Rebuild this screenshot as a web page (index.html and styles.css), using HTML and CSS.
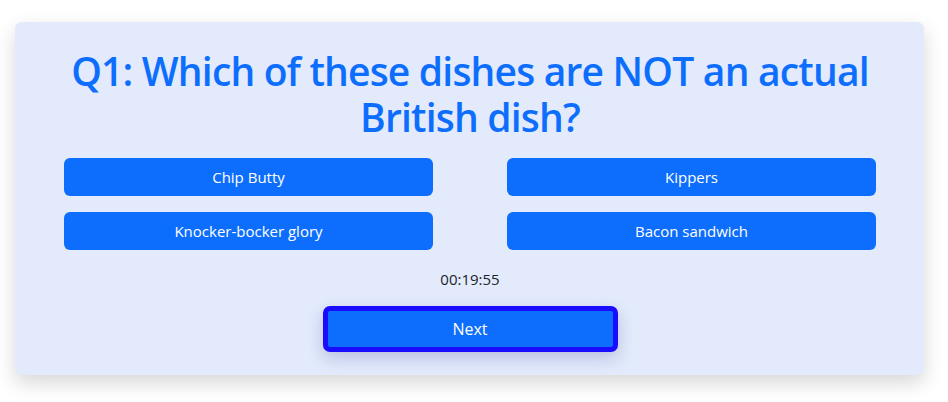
FILE: index.html
```html
<!DOCTYPE html>
<html lang="en">
<head>
<meta charset="utf-8">
<title>Quiz</title>
<link rel="stylesheet" href="styles.css">
</head>
<body>
<main class="card">
  <h1 class="question">Q1: Which of these dishes are NOT an actual British dish?</h1>
  <div class="answers">
    <button class="answer">Chip Butty</button>
    <button class="answer">Kippers</button>
    <button class="answer">Knocker-bocker glory</button>
    <button class="answer">Bacon sandwich</button>
  </div>
  <div class="timer">00:19:55</div>
  <div class="actions">
    <button class="next">Next</button>
  </div>
</main>
</body>
</html>
```
FILE: styles.css
```css
* { box-sizing: border-box; }
html, body { margin: 0; padding: 0; background: #ffffff; }
body {
  padding: 22px 24px 27px 15px;
  min-height: 402px;
  font-family: "Open Sans", "Noto Sans", sans-serif;
  color: #212529;
}
.card {
  width: 909px;
  background: #e2eafc;
  border-radius: 7px;
  box-shadow: 0 8px 20px rgba(0, 0, 0, 0.16);
  padding: 26px 48px 23px 49px;
}
.question {
  margin: 0;
  text-align: center;
  color: #0d6efd;
  font-weight: 600;
  font-size: 39px;
  line-height: 46px;
  letter-spacing: -0.8px;
}
.answers {
  margin-top: 18px;
  display: grid;
  grid-template-columns: 1fr 1fr;
  grid-auto-rows: 38px;
  column-gap: 74px;
  row-gap: 16px;
}
.answer {
  border: none;
  border-radius: 6px;
  background: #0d6efd;
  color: #ffffff;
  font-family: inherit;
  font-size: 15px;
  padding: 0;
  cursor: pointer;
}
.timer {
  margin-top: 17px;
  text-align: center;
  font-size: 15px;
  line-height: 24px;
}
.actions {
  margin-top: 15px;
  display: flex;
  justify-content: center;
}
.next {
  width: 295px;
  height: 46px;
  border: 5px solid #1a0dff;
  border-radius: 7px;
  background: #0d6efd;
  color: #ffffff;
  font-family: inherit;
  font-size: 16px;
  box-shadow: 0 6px 16px rgba(40, 40, 120, 0.22);
  cursor: pointer;
}
```
